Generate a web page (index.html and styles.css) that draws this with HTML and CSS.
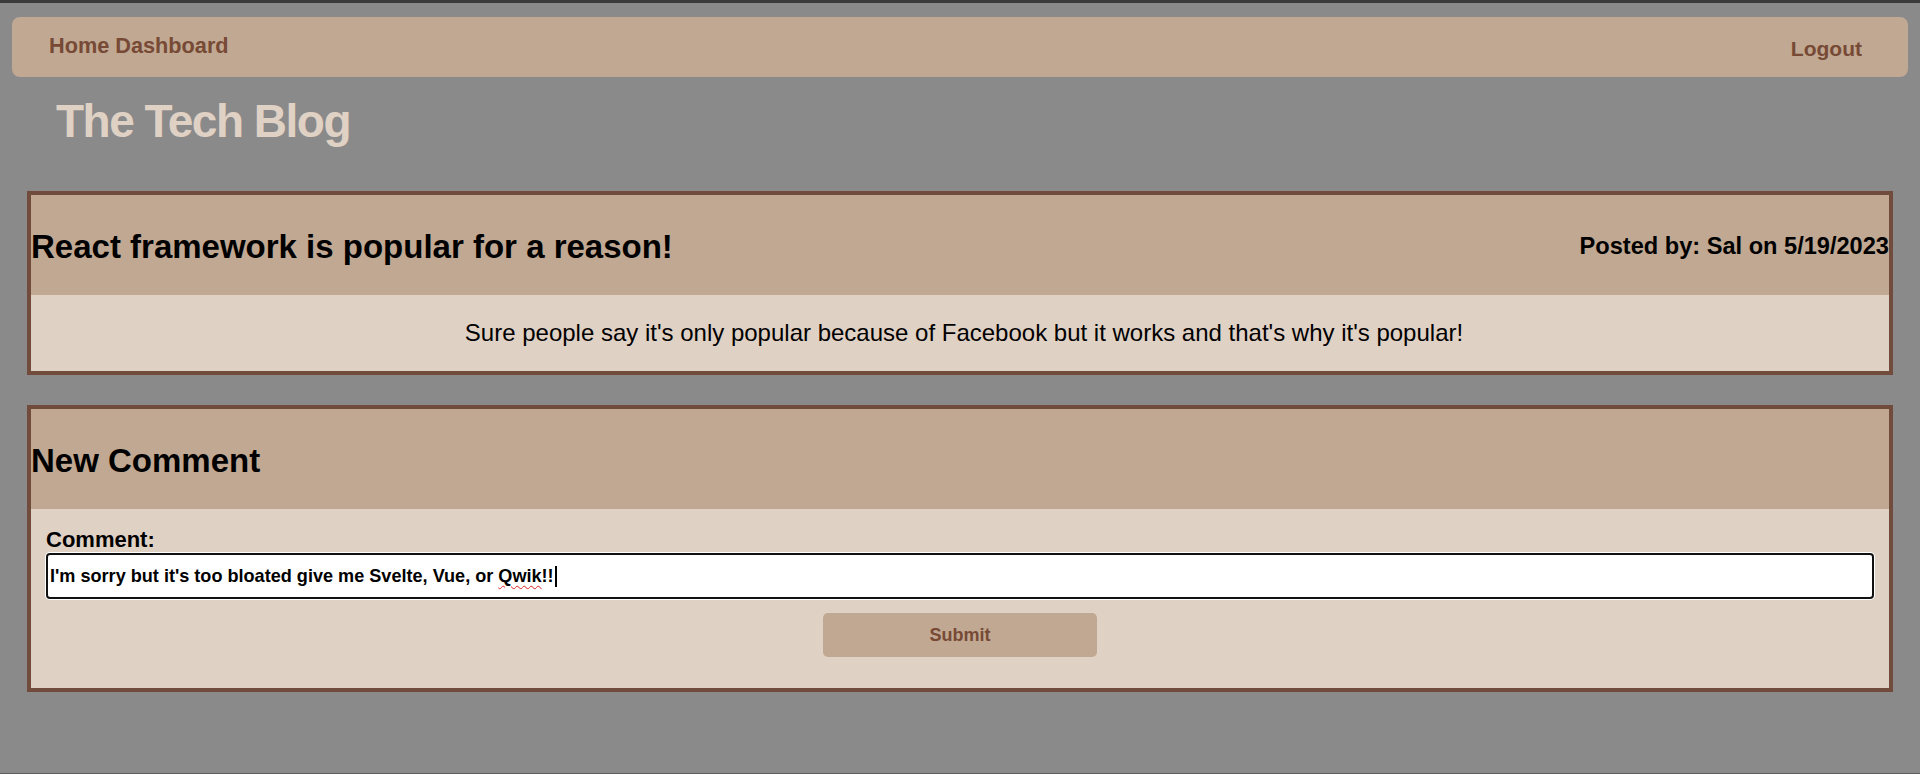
FILE: index.html
```html
<!DOCTYPE html>
<html lang="en">
<head>
<meta charset="utf-8">
<title>The Tech Blog</title>
<link rel="stylesheet" href="styles.css">
</head>
<body>
<nav class="nav">
  <div class="nav-links"><a class="nav-link" href="#">Home</a> <a class="nav-link" href="#">Dashboard</a></div>
  <a class="nav-link logout" href="#">Logout</a>
</nav>
<h1 class="site-title">The Tech Blog</h1>
<main class="content">
  <section class="card">
    <header class="card-header">
      <h2 class="card-title">React framework is popular for a reason!</h2>
      <p class="meta">Posted by: Sal on 5/19/2023</p>
    </header>
    <div class="post-body">
      <p class="post-text">Sure people say it's only popular because of Facebook but it works and that's why it's popular!</p>
    </div>
  </section>
  <section class="card">
    <header class="card-header">
      <h2 class="card-title">New Comment</h2>
    </header>
    <form class="comment-form">
      <label class="comment-label">Comment:</label>
      <div class="comment-input">I'm sorry but it's too bloated give me Svelte, Vue, or <span class="misspelled">Qwik</span>!!<span class="caret"></span></div>
      <button class="submit" type="button">Submit</button>
    </form>
  </section>
</main>
</body>
</html>
```
FILE: styles.css
```css
html, body {
  height: 100%;
}
body {
  margin: 0;
  min-height: 100vh;
  box-sizing: border-box;
  background: #8a8a8a;
  border-top: 3px solid #3b3b3b;
  border-bottom: 1px solid #5e5e5e;
  padding-top: 14px;
  font-family: "Liberation Sans", Arial, sans-serif;
  color: #000;
}
.nav {
  margin: 0 12px;
  height: 60px;
  box-sizing: border-box;
  background: #c1a892;
  border-radius: 8px;
  display: flex;
  justify-content: space-between;
  align-items: center;
  padding: 0 46px 0 37px;
}
.nav-links {
  padding-bottom: 2px;
  font-size: 21.7px;
}
.nav-link {
  color: #774a36;
  text-decoration: none;
  font-weight: bold;
  font-size: 21.7px;
  line-height: 24px;
}
.logout {
  padding-top: 3px;
  font-size: 21px;
}
.site-title {
  margin: 18px 0 0 56px;
  font-size: 46px;
  line-height: 53px;
  letter-spacing: -1.5px;
  color: #e0d1c5;
  font-weight: bold;
}
.content {
  margin: 43px 27px 0;
  display: flex;
  flex-direction: column;
  gap: 30px;
}
.card {
  border: 4px solid #714b3b;
  background: #e0d1c5;
}
.card-header {
  background: #c1a892;
  height: 100px;
  box-sizing: border-box;
  padding-top: 3px;
  display: flex;
  justify-content: space-between;
  align-items: center;
}
.card-title {
  margin: 0;
  font-size: 33px;
  line-height: 38px;
  font-weight: bold;
}
.meta {
  margin: 0;
  font-size: 23.6px;
  line-height: 27px;
  font-weight: bold;
}
.post-body {
  padding: 24px 0 24px 8px;
  text-align: center;
}
.post-text {
  margin: 0;
  font-size: 24px;
  line-height: 28px;
}
.comment-form {
  padding: 18px 15px 31px;
  display: flex;
  flex-direction: column;
}
.comment-label {
  font-size: 22px;
  line-height: 26px;
  font-weight: bold;
}
.comment-input {
  height: 46px;
  box-sizing: border-box;
  border: 2px solid #111;
  border-radius: 4px;
  box-shadow: 0 0 0 1px #fff;
  background: #fff;
  padding: 1px 2px;
  display: flex;
  align-items: center;
  white-space: pre;
  font-size: 18.1px;
  font-weight: bold;
}
.misspelled {
  text-decoration: underline wavy #e02020;
  text-decoration-thickness: 1px;
  text-underline-offset: 3px;
}
.caret {
  display: inline-block;
  width: 2px;
  height: 21px;
  background: #000;
  margin-left: 1px;
}
.submit {
  align-self: center;
  margin-top: 14px;
  width: 274px;
  height: 44px;
  border: none;
  border-radius: 5px;
  background: #c1a892;
  color: #774a36;
  font-family: "Liberation Sans", Arial, sans-serif;
  font-size: 18px;
  font-weight: bold;
  cursor: pointer;
}
```
